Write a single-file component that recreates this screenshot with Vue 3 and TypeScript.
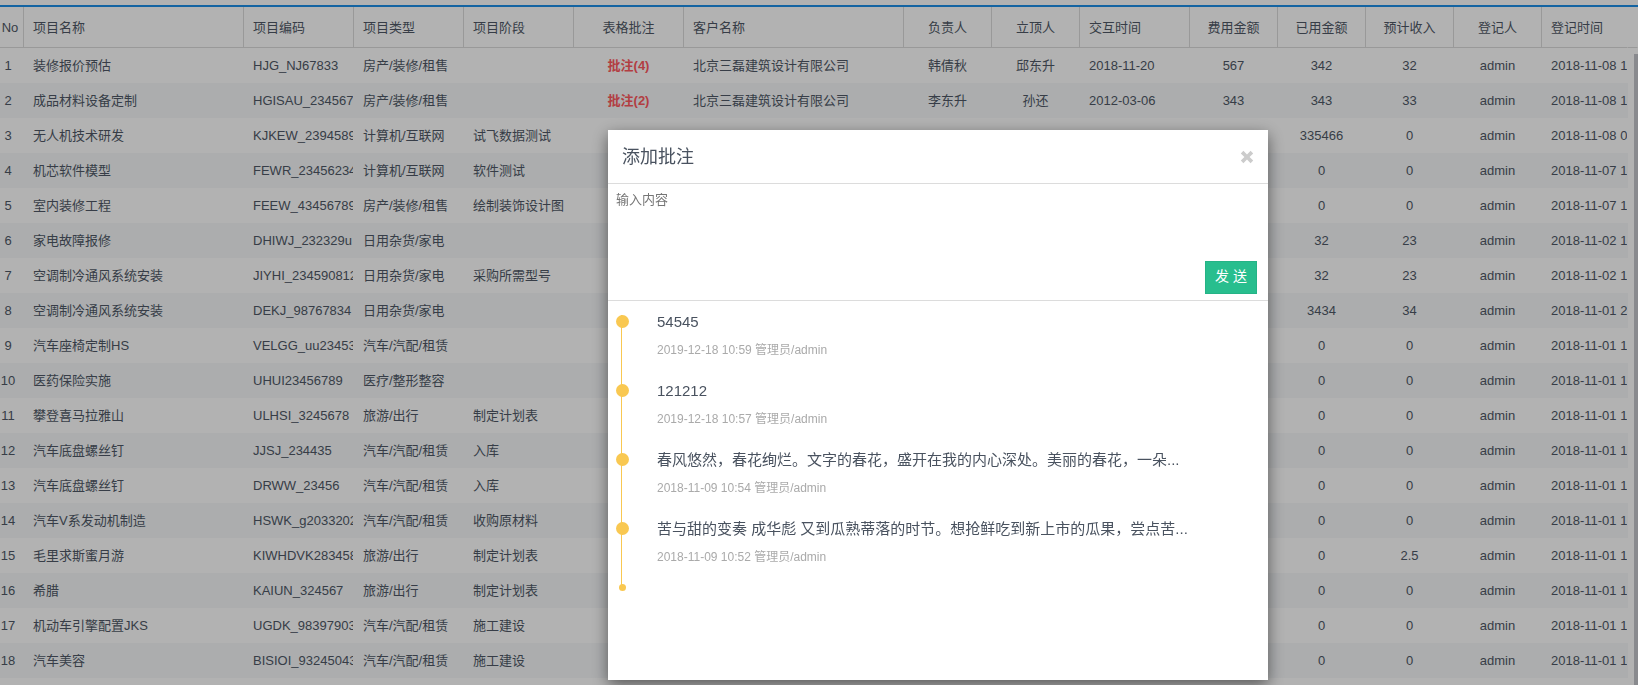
<script setup lang="ts">
import { ref } from 'vue'

interface Column {
  key: string
  label: string
  width: string
  center: boolean
}

interface Note {
  text: string
  time: string
}

const columns: Column[] = [
  { key: 'no', label: 'No', width: 'w-no', center: true },
  { key: 'name', label: '项目名称', width: 'w-l', center: false },
  { key: 'code', label: '项目编码', width: 'w-m', center: false },
  { key: 'type', label: '项目类型', width: 'w-m', center: false },
  { key: 'stage', label: '项目阶段', width: 'w-m', center: false },
  { key: 'notes', label: '表格批注', width: 'w-m', center: true },
  { key: 'client', label: '客户名称', width: 'w-l', center: false },
  { key: 'owner', label: '负责人', width: 'w-s', center: true },
  { key: 'lead', label: '立顶人', width: 'w-s', center: true },
  { key: 'date', label: '交互时间', width: 'w-m', center: false },
  { key: 'cost', label: '费用金额', width: 'w-s', center: true },
  { key: 'used', label: '已用金额', width: 'w-s', center: true },
  { key: 'income', label: '预计收入', width: 'w-s', center: true },
  { key: 'user', label: '登记人', width: 'w-s', center: true },
  { key: 'created', label: '登记时间', width: 'w-auto', center: false },
]

const source: string[][] = [
  ['装修报价预估', 'HJG_NJ67833', '房产/装修/租售', '', '342', '32', '2018-11-08 1'],
  ['成品材料设备定制', 'HGISAU_234567', '房产/装修/租售', '', '343', '33', '2018-11-08 1'],
  ['无人机技术研发', 'KJKEW_2394589', '计算机/互联网', '试飞数据测试', '335466', '0', '2018-11-08 0'],
  ['机芯软件模型', 'FEWR_23456234', '计算机/互联网', '软件测试', '0', '0', '2018-11-07 1'],
  ['室内装修工程', 'FEEW_43456789', '房产/装修/租售', '绘制装饰设计图', '0', '0', '2018-11-07 1'],
  ['家电故障报修', 'DHIWJ_232329u', '日用杂货/家电', '', '32', '23', '2018-11-02 1'],
  ['空调制冷通风系统安装', 'JIYHI_234590812', '日用杂货/家电', '采购所需型号', '32', '23', '2018-11-02 1'],
  ['空调制冷通风系统安装', 'DEKJ_98767834', '日用杂货/家电', '', '3434', '34', '2018-11-01 2'],
  ['汽车座椅定制HS', 'VELGG_uu23453', '汽车/汽配/租赁', '', '0', '0', '2018-11-01 1'],
  ['医药保险实施', 'UHUI23456789', '医疗/整形整容', '', '0', '0', '2018-11-01 1'],
  ['攀登喜马拉雅山', 'ULHSI_3245678', '旅游/出行', '制定计划表', '0', '0', '2018-11-01 1'],
  ['汽车底盘螺丝钉', 'JJSJ_234435', '汽车/汽配/租赁', '入库', '0', '0', '2018-11-01 1'],
  ['汽车底盘螺丝钉', 'DRWW_23456', '汽车/汽配/租赁', '入库', '0', '0', '2018-11-01 1'],
  ['汽车V系发动机制造', 'HSWK_g2033202', '汽车/汽配/租赁', '收购原材料', '0', '0', '2018-11-01 1'],
  ['毛里求斯蜜月游', 'KIWHDVK283458', '旅游/出行', '制定计划表', '0', '2.5', '2018-11-01 1'],
  ['希腊', 'KAIUN_324567', '旅游/出行', '制定计划表', '0', '0', '2018-11-01 1'],
  ['机动车引擎配置JKS', 'UGDK_98397903', '汽车/汽配/租赁', '施工建设', '0', '0', '2018-11-01 1'],
  ['汽车美容', 'BISIOI_93245043', '汽车/汽配/租赁', '施工建设', '0', '0', '2018-11-01 1'],
]

const details: Record<string, string>[] = [
  { notes: '批注(4)', client: '北京三磊建筑设计有限公司', owner: '韩倩秋', lead: '邱东升', date: '2018-11-20', cost: '567' },
  { notes: '批注(2)', client: '北京三磊建筑设计有限公司', owner: '李东升', lead: '孙还', date: '2012-03-06', cost: '343' },
]

const rows: Record<string, string>[] = source.map((r, i) => ({
  no: String(i + 1),
  name: r[0],
  code: r[1],
  type: r[2],
  stage: r[3],
  used: r[4],
  income: r[5],
  user: 'admin',
  created: r[6],
  ...(details[i] ?? {}),
}))

const notes: Note[] = [
  { text: '54545', time: '2019-12-18 10:59 管理员/admin' },
  { text: '121212', time: '2019-12-18 10:57 管理员/admin' },
  { text: '春风悠然，春花绚烂。文字的春花，盛开在我的内心深处。美丽的春花，一朵...', time: '2018-11-09 10:54 管理员/admin' },
  { text: '苦与甜的变奏 成华彪 又到瓜熟蒂落的时节。想抢鲜吃到新上市的瓜果，尝点苦...', time: '2018-11-09 10:52 管理员/admin' },
]

const draft = ref('')
const open = ref(true)
</script>

<template>
  <main class="page">
    <table class="grid">
      <colgroup>
        <col v-for="c in columns" :key="c.key" :class="c.width" />
        <col class="w-gutter" />
      </colgroup>
      <thead>
        <tr>
          <th v-for="c in columns" :key="c.key" scope="col" :class="[c.key, { center: c.center }]">{{ c.label }}</th>
          <td class="gutter"></td>
        </tr>
      </thead>
      <tbody>
        <tr v-for="row in rows" :key="row.no">
          <td v-for="c in columns" :key="c.key" :class="[c.key, { center: c.center }]">
            <a v-if="c.key === 'notes' && row.notes" href="#">{{ row.notes }}</a>
            <template v-else>{{ row[c.key] }}</template>
          </td>
          <td class="gutter"></td>
        </tr>
      </tbody>
    </table>
    <div class="thumb"></div>
  </main>

  <div v-if="open" class="overlay">
    <section class="dialog" role="dialog" aria-labelledby="dialog-title">
      <header class="dialog-head">
        <h2 id="dialog-title">添加批注</h2>
        <button type="button" class="close" aria-label="关闭" @click="open = false">
          <svg viewBox="0 0 14 14" width="14" height="14" aria-hidden="true">
            <path d="M3.4 .8 L7 4.4 L10.6 .8 L13.2 3.4 L9.6 7 L13.2 10.6 L10.6 13.2 L7 9.6 L3.4 13.2 L.8 10.6 L4.4 7 L.8 3.4 Z" fill="#ccc" />
          </svg>
        </button>
      </header>
      <form class="editor" @submit.prevent>
        <textarea v-model="draft" placeholder="输入内容" aria-label="输入内容"></textarea>
        <button type="submit" class="send">发 送</button>
      </form>
      <ul class="timeline">
        <li v-for="n in notes" :key="n.time">
          <p class="text">{{ n.text }}</p>
          <p class="time">{{ n.time }}</p>
        </li>
      </ul>
    </section>
  </div>
</template>

<style>
body {
  margin: 0;
  overflow: hidden;
  background: #fff;
}
</style>

<style scoped>
.page,
.overlay,
.overlay button,
.overlay textarea {
  font-family: "Liberation Sans", "Noto Sans CJK SC", sans-serif;
}

.page {
  position: relative;
  height: 100vh;
  box-sizing: border-box;
  padding-top: 5px;
  overflow: hidden;
  color: #4f5866;
  font-size: 13px;
  line-height: 20px;
}

.grid {
  width: 100%;
  table-layout: fixed;
  border-collapse: separate;
  border-spacing: 0;
  border-top: 2px solid #1e90e8;
}

.w-no { width: 24px; }
.w-s { width: 88px; }
.w-m { width: 110px; }
.w-l { width: 220px; }
.w-gutter { width: 10px; }

th,
td {
  box-sizing: border-box;
  height: 35px;
  padding: 1px 0 0 9px;
  border-right: 1px solid transparent;
  overflow: hidden;
  font-weight: normal;
  text-align: left;
  white-space: nowrap;
}

th,
thead .gutter {
  height: 41px;
  border-right-color: #dcdcdc;
  border-bottom: 1px solid #dcdcdc;
}

th.created,
thead .gutter {
  border-right-color: transparent;
}

.center {
  padding-left: 0;
  text-align: center;
}

th.no { padding-right: 3px; }
td.no { padding-right: 7px; }

tbody tr:nth-child(even) td:not(.gutter) {
  background: #f6f8fa;
}

td.gutter {
  padding: 0;
}

td.notes a {
  color: #ff5a5f;
  font-weight: bold;
  text-decoration: none;
}

.thumb {
  position: absolute;
  top: 54px;
  right: 0;
  bottom: 0;
  width: 4px;
  background: #c5c6cc;
}

.overlay {
  position: fixed;
  inset: 0;
  display: flex;
  justify-content: flex-end;
  align-items: flex-start;
  padding: 130px 370px 0 0;
  background: rgba(0, 0, 0, 0.3);
}

.dialog {
  width: 660px;
  min-height: 550px;
  background: #fff;
  box-shadow: 0 5px 15px rgba(0, 0, 0, 0.5);
  color: #49525f;
}

.dialog-head {
  display: flex;
  align-items: center;
  justify-content: space-between;
  height: 53px;
  padding: 0 14px;
  border-bottom: 1px solid #dcdcdc;
}

h2 {
  margin: 0;
  font-size: 18px;
  line-height: 24px;
  font-weight: normal;
}

.close {
  display: flex;
  padding: 0;
  border: 0;
  background: none;
}

.editor {
  display: flex;
  flex-direction: column;
  height: 116px;
  border-bottom: 1px solid #dcdcdc;
}

textarea {
  flex: 1;
  box-sizing: border-box;
  width: 100%;
  padding: 6px 8px;
  border: 0;
  outline: 0;
  resize: none;
  font-size: 13px;
  line-height: 20px;
}

textarea::placeholder {
  color: #757575;
}

.send {
  align-self: flex-end;
  width: 52px;
  height: 33px;
  margin: 0 11px 6px 0;
  padding: 0 0 3px;
  border: 1px solid #25b386;
  background: #28be8e;
  color: #fff;
  font-size: 14px;
  line-height: 20px;
}

.timeline {
  position: relative;
  margin: 0 8px;
  padding: 8px 0 0;
  list-style: none;
}

.timeline::before {
  content: "";
  position: absolute;
  left: 5px;
  top: 14px;
  bottom: 0;
  width: 1px;
  background: #f9c851;
}

.timeline::after {
  content: "";
  position: absolute;
  left: 3px;
  bottom: -6px;
  width: 7px;
  height: 7px;
  border-radius: 50%;
  background: #f9c851;
}

.timeline li {
  position: relative;
  height: 69px;
  padding-left: 41px;
}

.timeline li::before {
  content: "";
  position: absolute;
  left: 0;
  top: 6px;
  width: 13px;
  height: 13px;
  border-radius: 50%;
  background: #f9c851;
}

.timeline p {
  margin: 0;
  overflow: hidden;
  white-space: nowrap;
  text-overflow: ellipsis;
}

.timeline .text {
  font-size: 15px;
  line-height: 26px;
}

.timeline .time {
  padding-top: 5px;
  color: #aaa;
  font-size: 12px;
  line-height: 20px;
}
</style>
